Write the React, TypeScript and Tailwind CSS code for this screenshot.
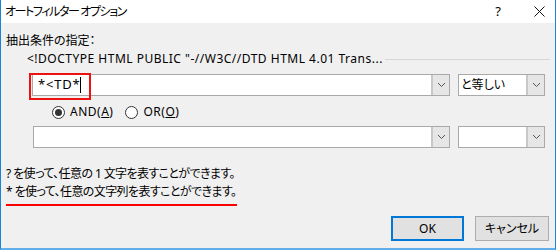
import React from "react";

const font = {
  fontFamily: '"Noto Sans", "Noto Sans CJK JP", sans-serif',
};

const Chevron = () => (
  <svg width="9" height="6" viewBox="0 0 9 6" className="text-[#555]">
    <path d="M1 1 L4.5 4.5 L8 1" fill="none" stroke="currentColor" strokeWidth="1" />
  </svg>
);

const Combo = ({ className, children }: { className: string; children?: React.ReactNode }) => (
  <div className={`${className} relative flex h-[22px] border border-[#a9a9a9] bg-white`}>
    <div className="flex flex-1 items-center pl-[2px] text-[12px] text-black">{children}</div>
    <div className="flex w-[18px] items-center justify-center border-l-2 border-[#c8c8c8] bg-[#e6e6e6]">
      <Chevron />
    </div>
  </div>
);

const Radio = ({ checked, label, hot }: { checked: boolean; label: string; hot: string }) => (
  <div className="flex items-center gap-[5px]">
    <div className="flex h-[13px] w-[13px] items-center justify-center rounded-full border border-[#333] bg-white">
      {checked && <div className="h-[7px] w-[7px] rounded-full bg-[#333]" />}
    </div>
    <span className="text-[12px] tracking-[0.5px] text-black">
      {label}(<span className="underline">{hot}</span>)
    </span>
  </div>
);

export default function App() {
  return (
    <div
      style={font}
      className="flex h-[250px] w-[557px] flex-col bg-white [font-feature-settings:'palt']"
    >
      <div className="flex h-[250px] w-[556px] flex-col border-x border-b-2 border-x-[#1883d7] border-b-[#62aeea]">
        {/* title bar */}
        <div className="flex h-[23px] items-center bg-white pl-[4px] pr-[10px] text-[12px] text-black">
          <span className="flex-1 tracking-[-1.4px]">オートフィルター オプション</span>
          <span className="mr-[33px] text-[13px]">?</span>
          <svg width="11" height="11" viewBox="0 0 11 11">
            <path d="M0.5 0.5 L10.5 10.5 M10.5 0.5 L0.5 10.5" stroke="#111" strokeWidth="1" />
          </svg>
        </div>

        {/* body */}
        <div className="flex flex-1 flex-col bg-[#f0f0f0] pl-[5px] pr-[5px] text-[12px] text-black">
          <div className="mt-[9px] h-[18px] leading-[18px]">抽出条件の指定：</div>
          <div className="flex h-[18px] items-center pl-[21px] leading-[18px]">
            <span className="whitespace-nowrap tracking-[0.5px]">&lt;!DOCTYPE HTML PUBLIC "-//W3C//DTD HTML 4.01 Trans...</span>
            <div className="ml-[2px] h-px flex-1 bg-[#d6d6d6]" />
          </div>

          <div className="mt-[6px] flex items-center pl-[26px]">
            <div className="relative w-[418px]">
              <Combo className="w-[418px]">
                <span className="ml-[3px] flex items-center text-[13px] tracking-[0.8px]">
                  *&lt;TD*
                  <span className="inline-block h-[16px] w-px bg-black" />
                </span>
              </Combo>
              <div className="pointer-events-none absolute left-[-3px] top-[-1px] h-[27px] w-[62px] border-2 border-[#ee1111]" />
            </div>
            <Combo className="ml-[8px] w-[87px]">と等しい</Combo>
          </div>

          <div className="mt-[7px] flex h-[18px] items-center gap-[12px] pl-[46px]">
            <Radio checked label="AND" hot="A" />
            <Radio checked={false} label="OR" hot="O" />
          </div>

          <div className="mt-[5px] flex items-center pl-[27px]">
            <Combo className="w-[417px]" />
            <Combo className="ml-[8px] w-[87px]" />
          </div>

          <div className="mt-[17px] h-[18px] leading-[18px] tracking-[-0.6px]">? を使って、任意の 1 文字を表すことができます。</div>
          <div className="h-[18px] leading-[18px] tracking-[-0.6px]">* を使って、任意の文字列を表すことができます。</div>
          <div className="mt-[3px] h-[2px] w-[231px] bg-[#ff0000]" />

          <div className="mt-[10px] flex justify-end gap-[11px] pr-[1px]">
            <button className="flex h-[25px] w-[73px] items-center justify-center border-2 border-[#0078d7] bg-[#e1e1e1] text-[12px] text-black">
              OK
            </button>
            <button className="flex h-[25px] w-[74px] items-center justify-center border border-[#adadad] bg-[#e1e1e1] text-[12px] text-black">
              キャンセル
            </button>
          </div>
        </div>
      </div>
    </div>
  );
}
